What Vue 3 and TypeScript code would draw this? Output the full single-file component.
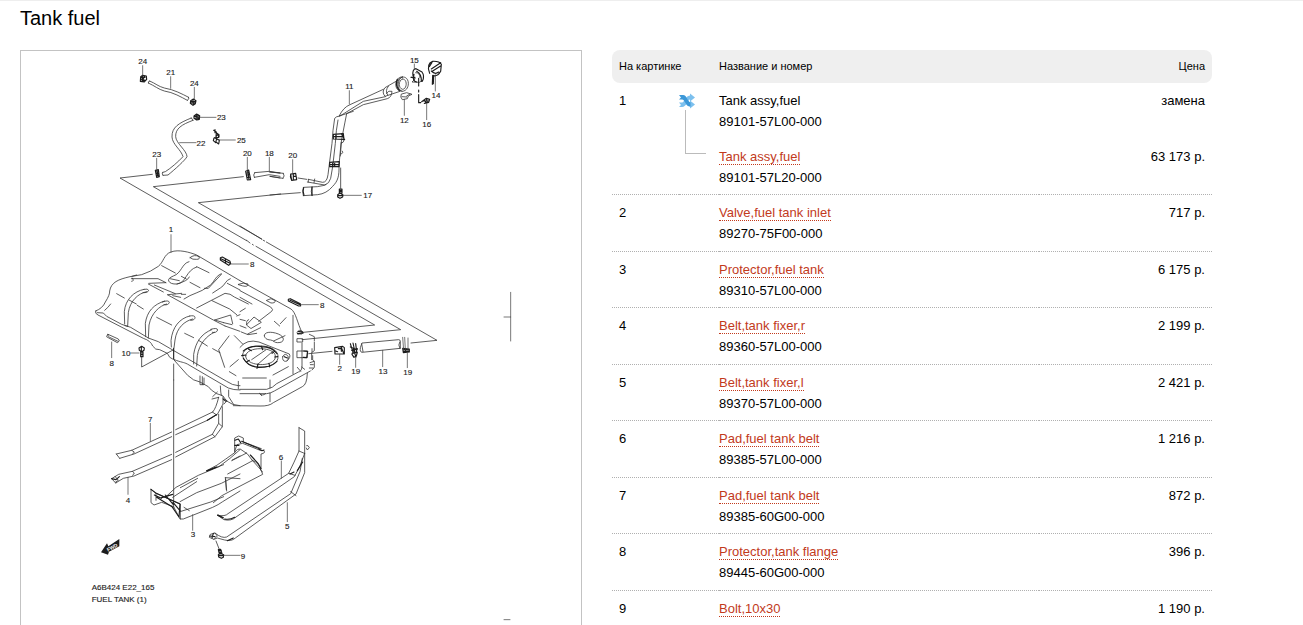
<script setup lang="ts">
interface Label {
  text: string
  x: number
  y: number
}

interface Section {
  id: string
  x: number
  y: number
  lines: string
  heavy: string
  leaders: string
  labels: Label[]
}

interface Part {
  pos: number
  name: string
  code: string
  price: string
}

const l = (text: string, x: number, y: number): Label => ({ text, x, y: y + 8 })

const sections: Section[] = [
  {
    id: 'hoses',
    x: 177,
    y: -3,
    lines:
      'M209 93C228 101 234 109 253 114C283 119 306 132 326 142M205 99C225 108 235 118 253 123C280 127 303 141 322 151M209 93Q203 94 205 99M326 142Q330 147 322 151' +
      'M334 204C296 219 275 232 276 261C277 283 304 300 309 320C293 337 273 354 256 365L248 367M339 211C304 224 286 236 287 260C288 280 321 302 321 320C316 330 285 358 264 375L249 376M334 204L339 211M248 367Q244 372 249 376' +
      'M217 373L120 384L446 572M490 380L220 410L500 572M602 432L355 458L545 567' +
      'M524 368L568 364L600 369M523 382L568 374L600 379M524 368Q518 375 523 382',
    heavy:
      'M182 80L188 76L199 78L200 88L193 96L181 94ZM184 84L195 82M184 89L196 91M188 77L190 95M184 80L192 92M194 79L186 94' +
      'M332 152L340 147L348 152L346 161L339 166L331 160ZM334 155L346 154M334 159L345 159M339 149L340 164' +
      'M342 198L350 192L359 197L358 208L350 210L342 205ZM345 199L356 198M346 204L357 204M350 194L351 209M354 194L355 208' +
      'M226 361L235 359L238 380L230 382ZM228 366H235M229 371H236M230 376H237M231 361L234 380' +
      'M497 364L506 360L512 389L502 390ZM500 369L507 368M501 375L509 373M502 382L510 381M503 363L507 389' +
      'M401 241L409 246L408 260L414 252L416 262L402 264L400 272L407 278L410 266L418 271L416 282L409 277M405 239V248M404 263L416 270M411 250L417 254V261',
    leaders:
      'M188 47V76M272 80V115M343 112V146M360 202H408M299 278H348M418 270H466M230 325V358M502 322V360M568 322V366',
    labels: [
      l('24', 188, 33), l('21', 272, 66), l('24', 343, 99), l('23', 424, 202), l('22', 363, 279),
      l('25', 484, 271), l('23', 230, 312), l('20', 502, 310), l('18', 568, 310),
    ],
  },
  {
    id: 'filler',
    x: 747,
    y: -3,
    lines:
      'M30 369L0 366M0 366L40 370M30 384L0 379M0 379L39 385M40 370Q46 378 39 385M84 384L110 388' +
      'M340 118L240 164Q220 172 208 197M385 90L345 113Q334 126 345 139L390 124M355 109Q344 122 353 135' +
      'M397 81C374 78 370 120 390 123M397 81C382 86 378 118 396 124M397 81C423 78 420 124 396 124C374 120 378 84 397 81M397 87C413 85 412 117 398 118C384 115 385 91 397 87' +
      'M349 130Q356 120 366 124Q365 142 352 146L280 164L230 191Q218 250 213 281L207 345C208 378 204 393 188 409Q170 431 143 434L100 437' +
      'M346 140L280 154L210 198Q198 199 194 205Q188 240 186 280L177 350L174 374Q171 397 158 397L115 388M204 210Q198 240 196 280L188 350L182 385Q178 401 164 405L112 396' +
      'M208 198L250 184M102 412L142 410Q162 407 168 404M100 412Q95 424 100 437M126 411Q121 424 126 437M134 387L132 398M115 388V396M0 435L91 428' +
      'M222 270Q222 278 214 280M217 303Q223 308 214 312M214 277L211 318M212 354V415' +
      'M395 132L410 128L426 133L415 138L412 146L397 149L393 142ZM410 138L420 132M396 140L410 141' +
      'M424 82L436 86L426 96L448 97L458 91M437 68Q450 67 450 83',
    heavy:
      'M190 253L220 251L222 268L190 267ZM191 260H220M198 253V267M214 251L224 269M179 337L208 335L207 350L179 350ZM180 344H207M188 337V350M194 336V350' +
      'M101 413Q97 424 102 436M126 411V436M382 88Q374 106 388 121' +
      'M429 78Q426 57 438 56L456 66Q465 78 457 94M423 82L435 82M432 73Q426 94 440 96M440 64Q455 72 454 94' +
      'M479 70Q468 42 488 34Q508 33 514 43L512 64Q503 81 488 77M484 57L512 38M488 63L513 47M478 50L486 37M484 63Q495 75 506 66M488 76L487 103M491 76L490 101' +
      'M446 85V108M446 120V126M446 134V158M446 158H452M455 155L469 145L479 148L476 157L463 160M463 149L468 158M469 145L472 158M458 153H476' +
      'M62 372L77 370L80 389L65 391ZM62 372Q59 382 65 391M70 374V387M70 379H78' +
      'M208 417H216V430H208ZM203 434L210 429L219 435L218 441L210 445L203 441ZM208 421H216M208 425H216M205 437H217',
    leaders: 'M238 122V162M433 42V58M496 74V123M403 148V196M470 160V209M68 329V368M220 436H274',
    labels: [
      l('11', 238, 110), l('15', 433, 30), l('14', 498, 135), l('12', 403, 210),
      l('16', 470, 222), l('20', 68, 316), l('17', 293, 436),
    ],
  },
  {
    id: 'tank-left',
    x: 177,
    y: 507,
    lines:
      'M446 62L480 81' +
      'M47 273Q68 265 76 246Q90 224 89 213C93 187 115 178 150 170L185 164Q213 155 235 139C250 128 252 102 273 96C295 87 330 97 350 105L480 182' +
      'M47 273Q44 281 54 285L190 355Q212 362 218 378Q226 391 239 389L262 400Q268 415 278 417L283 419M52 278L70 279L80 289L125 313L152 322L205 354L235 365L440 484Q457 496 475 497L480 497M92 252Q84 263 74 271' +
      'M283 419C306 428 310 426 322 432L445 504Q460 510 480 510M283 421L323 466Q340 483 360 486L385 500Q391 510 410 521L428 527Q437 546 458 553L480 557M360 468V494L372 494V474M367 470V494M421 498Q422 520 424 527M446 510V530L460 552' +
      'M110 221L133 234M147 240L169 252M172 256L190 267M230 292L275 315M314 340L341 353M356 361L382 378M398 386L420 398M154 176H234L258 188M157 174Q164 184 155 184M156 169L170 165' +
      'M245 137L286 159M304 169L319 177M330 187L360 203M350 140L387 158M373 205H385L424 163M262 224L400 300L435 318M435 318L480 334' +
      'M134 312L133 275C136 238 162 214 192 208M143 318L145 278C150 242 175 220 200 215M192 208Q204 205 206 211Q204 219 189 218M135 317L143 319' +
      'M197 350L196 310C201 274 221 253 254 243M205 354L207 315C214 279 239 257 260 252M247 246Q266 239 268 247Q265 257 252 254' +
      'M274 381L273 362C277 321 299 295 329 288M282 384L285 360C290 323 314 303 338 297M329 288Q344 285 345 292Q345 301 332 301' +
      'M341 432L341 403C347 366 364 341 395 329M350 438L352 407C357 372 381 346 403 337M392 328Q412 322 413 330Q409 340 397 337' +
      'M327 125C305 130 305 160 280 168Q263 175 266 183Q271 193 291 192C318 190 318 150 350 141M291 192Q325 182 328 171M270 176L298 182' +
      'M207 190L257 188M205 192L250 216M223 195L286 221M304 223H317M264 224L305 220M278 227L302 232' +
      'M424 161C402 170 404 190 384 200C362 218 336 220 312 237M451 176C436 180 435 197 421 204L398 219M350 264L435 220Q451 220 463 231L505 252M396 242L449 267L470 284M442 190L480 210' +
      'M404 300L452 285L458 311M404 300L431 308M431 308L456 314M484 336L504 344L530 340M470 288L480 284' +
      'M447 348L416 389L434 442M463 347L489 373M475 419L450 440M448 455L468 467M475 484V507' +
      'M330 113Q343 102 357 110Q361 118 350 118Q338 120 330 113M475 193Q491 186 504 192Q505 202 489 198Z' +
      'M84 343L115 357L118 363L112 368L81 351ZM84 343Q81 347 89 352L114 364' +
      'M185 410V441L281 389M281 432V480',
    heavy:
      'M421 113L427 111L450 124L452 131L446 136L421 120ZM423 116L450 130M436 118L437 128' +
      'M177 384L185 379L193 384L192 391L185 395L178 391ZM182 395H189V410H182ZM182 399H189M182 404H189M184 380V393' +
      'M281 385V416',
    leaders: 'M273 44V97M452 132H505M95 366V413M152 399H177',
    labels: [l('1', 273, 28), l('8', 517, 132), l('8', 95, 430), l('10', 138, 400)],
  },
  {
    id: 'tank-right',
    x: 657,
    y: 507,
    lines:
      'M0 18L66 58M70 61L74 63M79 66L591 361L513 369M20 61L30 69M37 73L40 75M48 79L482 329L186 359M0 82L404 315L190 337' +
      'M0 182L153 267C168 277 172 310 186 337M0 212L92 261Q102 270 95 274L56 304M0 232L36 252M16 265L0 275M20 314L42 291L64 307L34 325ZM0 298L16 302M0 317L18 324M20 314Q18 300 26 299' +
      'M103 304L119 318M121 311L138 293M159 286V462M172 442L182 454M186 369V441Q184 455 175 456L110 491Q100 503 80 508L0 508' +
      'M0 521H80Q92 520 103 513L211 453M-20 557L60 558Q87 559 100 548L187 500Q201 494 202 460M58 520Q67 530 77 521M61 523L65 527M90 480V504M90 519V545M8 474H79M99 465L145 440' +
      'M73 348C71 336 92 333 115 342C135 350 136 369 112 368C102 368 103 362 92 360C78 359 75 354 73 348M101 363L135 347M23 342L62 323' +
      'M8 405C8 368 111 368 114 408C118 454 9 453 8 405M17 408C18 378 104 379 106 408C110 443 17 442 17 408M35 419L77 390M52 434L97 395M0 382Q20 356 57 366L148 402Q154 412 141 422M128 410Q136 396 144 409Q148 422 137 424Q126 424 128 410' +
      'M80 241L93 236L106 242Q106 250 94 249Z' +
      'M172 356L188 356V366L172 366ZM172 337L179 330L189 336L186 342H174ZM208 343L223 350V362M223 366V392L216 397V386M185 441L194 448M215 419V398M218 407V420L223 424V442L216 450M210 428L222 424M211 434H220M208 444H220' +
      'M172 393H202V413H172ZM206 401L276 394' +
      'M367 369L476 359Q482 359 481 366V385L366 397Q359 396 361 384ZM479 366Q473 374 480 386M365 371L369 395',
    heavy:
      'M145 238L151 236L181 251L182 258L176 258L145 243ZM150 241L180 254M191 393L203 394L200 413L190 412' +
      'M174 334L188 336M173 341L190 339M25 387L34 392M64 379L68 389M103 394L96 400M5 407L18 405M19 426L28 421M51 445L54 432M89 441L87 430M113 410L104 411M133 410L142 414' +
      'M10 393Q30 375 64 380Q96 380 111 401M10 415Q24 440 53 442Q92 443 111 424' +
      'M284 383L308 379L313 383V402H285ZM303 380L312 402M295 386H304V394M287 393L293 395' +
      'M331 371L340 400M339 369L345 396M347 371L350 395M331 381L352 389M335 391L352 386M337 399L352 397L349 408L342 412L336 403ZM340 388L348 411' +
      'M488 385L508 387V396L490 398ZM491 389H506M492 394H506M497 387V397',
    leaders:
      'M182 254H235M299 403V433M347 412V442M428 391V440M502 398V443M488 352L491 391M494 352L496 388M504 354V392M812 217V363M792 291H812',
    labels: [
      l('8', 247, 255), l('2', 299, 444), l('19', 347, 454), l('13', 429, 453), l('19', 503, 457),
    ],
  },
  {
    id: 'straps-left',
    x: 177,
    y: 987,
    lines:
      'M281 0V382M109 222L155 211L275 156M287 149L398 96Q408 85 416 52M119 235L162 222L275 170M287 164L382 121L412 103L429 72V50M109 222L119 235M155 211L163 216L158 222' +
      'M95 296L116 283L157 274L275 223M287 217L397 163L416 130V103M107 309L130 295L162 288L275 239M287 231L405 170L427 140V80M95 296L107 309M157 274L163 279L158 286M105 289L115 301L107 306M397 96L410 105M397 163L405 170M416 130L427 140M398 50L412 36M396 57L416 52M429 56L441 62L432 72' +
      'M213 328V368L222 375L245 367L281 380L300 417L310 417L398 382Q416 374 428 365L480 333M213 328L228 340L301 372V417M228 340V361M300 395L392 366L431 350M300 365L350 338L424 310L480 282' +
      'M256 352L288 322L355 286L417 260Q450 237 480 209M278 352L350 305M381 273L431 254M301 323L353 295M437 297L440 333M312 382L328 392M457 240L480 228',
    heavy:
      'M213 328L229 340L300 372L297 411L276 380L230 352M223 345L244 355M256 345L280 374M279 367L300 392M245 353L278 343M382 121L409 104M95 296L108 299L118 290M381 273L408 262' +
      'M414 405L430 413M430 58L438 64',
    leaders: 'M211 130V184M144 292V343M338 404V451',
    labels: [l('7', 211, 117), l('4', 144, 361), l('3', 339, 464)],
  },
  {
    id: 'straps-right',
    x: 507,
    y: 987,
    lines:
      'M134 214V174L146 168L160 174V186L214 206M134 214L141 194L158 190L208 210L222 212Q228 219 213 222V267M134 218Q142 204 152 208Q175 219 186 240L213 270L218 283L120 334Q96 343 70 368M186 240Q210 250 212 270' +
      'M134 218L106 238Q84 256 50 272M106 293L109 329M150 296L106 293M113 282L188 242M125 242L170 219M218 276L212 270' +
      'M327 143L344 153V220M327 143V213Q313 246 296 280L114 401Q106 410 83 406M344 220Q331 262 313 290L138 411Q124 424 102 419L83 406M327 213L343 220M296 280L315 286' +
      'M344 220V278L318 342L136 474Q125 485 104 480L82 474L72 478M337 235L330 275L302 341L110 471Q96 476 75 459L61 463L58 472L72 478L82 468L75 459M302 335L318 347M350 197L354 197L358 203L352 210L349 204M78 483L87 506',
    heavy:
      'M83 406L98 413M135 181L145 177L152 188M207 208L216 212L222 210M134 196H147M155 184L210 207M181 225L204 250L213 266M59 468L75 470M70 460L66 474M104 417Q120 420 134 412M112 482L130 474M300 282L312 276M322 272L338 246M50 272L80 261' +
      'M85 509L92 508L96 521L88 522ZM85 524L91 520L101 524L100 532L94 535L86 531ZM86 513L94 511M87 517L95 516M86 527H100',
    leaders: 'M274 243V295M292 368V425M102 526H150',
    labels: [l('6', 273, 231), l('5', 292, 438), l('9', 159, 528)],
  },
]

const parts: Part[] = [
  { pos: 2, name: 'Valve,fuel tank inlet', code: '89270-75F00-000', price: '717 р.' },
  { pos: 3, name: 'Protector,fuel tank', code: '89310-57L00-000', price: '6 175 р.' },
  { pos: 4, name: 'Belt,tank fixer,r', code: '89360-57L00-000', price: '2 199 р.' },
  { pos: 5, name: 'Belt,tank fixer,l', code: '89370-57L00-000', price: '2 421 р.' },
  { pos: 6, name: 'Pad,fuel tank belt', code: '89385-57L00-000', price: '1 216 р.' },
  { pos: 7, name: 'Pad,fuel tank belt', code: '89385-60G00-000', price: '872 р.' },
  { pos: 8, name: 'Protector,tank flange', code: '89445-60G00-000', price: '396 р.' },
  { pos: 9, name: 'Bolt,10x30', code: '09119-10078-000', price: '1 190 р.' },
]
</script>

<template>
  <main class="page">
    <h1 class="title">Tank fuel</h1>
    <div class="content">
      <figure class="scheme">
        <svg class="drawing" viewBox="0 0 1680 1800" role="img" aria-label="Fuel tank">
          <g v-for="s in sections" :key="s.id" :transform="`translate(${s.x} ${s.y})`">
            <path class="line" :d="s.lines" />
            <path class="heavy" :d="s.heavy" />
            <path class="leader" :d="s.leaders" />
            <text v-for="(t, i) in s.labels" :key="i" class="label" :x="t.x" :y="t.y">{{ t.text }}</text>
          </g>
          <path class="arrow" d="M240 1504L258 1477L262 1486L295 1464V1486L264 1502L261 1511Z" />
          <text class="arrow-text" transform="translate(261 1502) rotate(-28)">FWD</text>
          <text class="caption" x="212" y="1618">A6B424 E22_165</text>
          <text class="caption" x="212" y="1652">FUEL TANK (1)</text>
          <path class="leader" d="M1449 1706H1467" />
        </svg>
      </figure>

      <table class="parts">
        <thead>
          <tr>
            <th class="pos" colspan="2" scope="col">На картинке</th>
            <th class="name" scope="col">Название и номер</th>
            <th class="price" scope="col">Цена</th>
          </tr>
        </thead>
        <tbody>
          <tr class="replaced">
            <td class="pos" rowspan="2">1</td>
            <td class="swap" rowspan="2">
              <svg class="swap-icon" viewBox="0 0 16 16" role="img" aria-label="замена">
                <path class="swap-light" d="M0 9.500H3C5.500 9.500 6 3 11 2.500V.5L16 4.500L11 8.500V6.500C9 6.500 7.500 14 3 14H0L2 12Z" />
                <path class="swap-light" d="M9 8L11 9.500V7.500L16 11.500L11 15.500V13.500C9 13.500 8 12.500 7 11Z" />
                <path class="swap-dark" d="M0 2H4C8 2 8.500 9 11.500 9.500V13.500C6.500 13.500 6 6.500 3 6.500H0L2 4.500Z" />
              </svg>
              <div class="branch"></div>
            </td>
            <td class="name">Tank assy,fuel<br />89101-57L00-000</td>
            <td class="price">замена</td>
          </tr>
          <tr class="replacement">
            <td class="name"><a class="link" href="#">Tank assy,fuel</a><br />89101-57L20-000</td>
            <td class="price">63 173 р.</td>
          </tr>
          <tr v-for="p in parts" :key="p.pos">
            <td class="pos" colspan="2">{{ p.pos }}</td>
            <td class="name"><a class="link" href="#">{{ p.name }}</a><br />{{ p.code }}</td>
            <td class="price">{{ p.price }}</td>
          </tr>
        </tbody>
      </table>
    </div>
  </main>
</template>

<style>
body {
  background: #fff;
}
</style>

<style scoped>
.page {
  box-sizing: border-box;
  height: 100vh;
  overflow: hidden;
  padding: 5px 91px 0 20px;
  border-top: 1px solid #eee;
  color: #000;
  font: 13px/21px "Liberation Sans", Arial, sans-serif;
}
.title {
  margin: 0 0 20px;
  font-size: 20px;
  font-weight: 400;
  line-height: 24px;
}
.content {
  display: grid;
  grid-template-columns: 562fr 600fr;
  gap: 30px;
  align-items: start;
}
.scheme {
  margin: 0;
  border: 1px solid #c3c3c3;
}
.drawing {
  display: block;
  width: 100%;
}
.line,
.heavy,
.leader {
  fill: none;
  stroke-linecap: round;
  stroke-linejoin: round;
}
.line {
  stroke: #333;
  stroke-width: 2.4;
}
.heavy {
  stroke: #1c1c1c;
  stroke-width: 3.4;
}
.leader {
  stroke: #444;
  stroke-width: 2.2;
}
.label,
.caption {
  fill: #1c1c1c;
  stroke: #1c1c1c;
  stroke-width: 0.4;
  font-size: 24px;
}
.label {
  text-anchor: middle;
}
.arrow {
  fill: #1c1c1c;
}
.arrow-text {
  fill: #fff;
  font-size: 15px;
  font-weight: 700;
}
.parts {
  width: 100%;
  border-collapse: separate;
  border-spacing: 0;
}
.parts th,
.parts td {
  padding: 7px;
  text-align: left;
  vertical-align: top;
}
.parts th {
  padding: 6px 7px;
  background: #efefef;
  font-size: 11px;
  font-weight: 400;
}
.parts th:first-child {
  border-radius: 8px 0 0 8px;
}
.parts th:last-child {
  border-radius: 0 8px 8px 0;
}
.parts td {
  border-bottom: 1px dotted #b0b0b0;
}
.parts tr:nth-child(even) td {
  padding-bottom: 6px;
}
.parts .replaced .name,
.parts .replaced .price {
  border-bottom: 0;
}
.parts .swap {
  width: 40px;
  padding: 10px 0 0;
}
.parts td.pos {
  width: 60px;
  padding-right: 0;
}
.parts .name {
  padding-left: 0;
}
.parts .price {
  text-align: right;
  white-space: nowrap;
}
.swap-icon {
  display: block;
  width: 16px;
  height: 16px;
}
.swap-light {
  fill: #7cc0ee;
}
.swap-dark {
  fill: #3c98d8;
}
.branch {
  width: 20px;
  height: 43px;
  margin: 1px 0 0 6px;
  border: solid #bbb;
  border-width: 0 0 1px 1px;
}
.link {
  border-bottom: 1px dotted #c23a1c;
  color: #c23a1c;
  text-decoration: none;
}
</style>
